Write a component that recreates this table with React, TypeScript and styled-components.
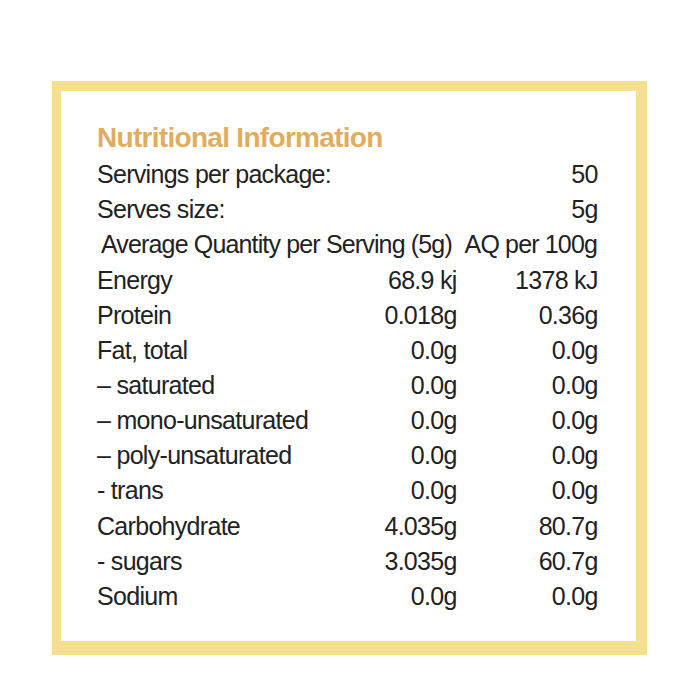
import React from "react";
import styled, { createGlobalStyle } from "styled-components";

const Global = createGlobalStyle`
  html, body { margin: 0; padding: 0; background: #ffffff; }
  body { font-family: "Liberation Sans", Arial, sans-serif; }
`;

const Page = styled.div`
  width: 700px;
  height: 700px;
  padding: 81px 0 0 52px;
  box-sizing: border-box;
`;

const Frame = styled.div`
  width: 595px;
  height: 574px;
  box-sizing: border-box;
  border-style: solid;
  border-color: #f4df91;
  border-width: 10px 11px 14px 9px;
  padding: 29px 39px 0 36px;
  background: #fff;
`;

const Title = styled.h2`
  margin: 0 0 1px;
  font-size: 28px;
  line-height: 36px;
  font-weight: 700;
  color: #dfae5c;
  letter-spacing: -0.7px;
`;

const Table = styled.div`
  display: grid;
  grid-template-columns: minmax(0, 1fr) 141px 141px;
  grid-auto-rows: 35.17px;
  align-items: center;
  color: #222;
  font-size: 25px;
  letter-spacing: -0.7px;
`;

const Cell = styled.div<{ $align?: "left" | "right" }>`
  text-align: ${(p) => p.$align ?? "left"};
  white-space: nowrap;
  margin-right: -0.7px;
`;

const Wide = styled.div<{ $span: string; $align?: "left" | "right" }>`
  grid-column: ${(p) => p.$span};
  text-align: ${(p) => p.$align ?? "left"};
  white-space: nowrap;
`;

const Header = styled.div`
  grid-column: 1 / -1;
  min-width: 0;
  display: flex;
  justify-content: space-between;
  padding-left: 4px;
  white-space: nowrap;
  letter-spacing: -0.85px;
`;

const rows: [string, string, string][] = [
  ["Energy", "68.9 kj", "1378 kJ"],
  ["Protein", "0.018g", "0.36g"],
  ["Fat, total", "0.0g", "0.0g"],
  ["– saturated", "0.0g", "0.0g"],
  ["– mono-unsaturated", "0.0g", "0.0g"],
  ["– poly-unsaturated", "0.0g", "0.0g"],
  ["- trans", "0.0g", "0.0g"],
  ["Carbohydrate", "4.035g", "80.7g"],
  ["- sugars", "3.035g", "60.7g"],
  ["Sodium", "0.0g", "0.0g"],
];

export default function App() {
  return (
    <Page>
      <Global />
      <Frame>
        <Title>Nutritional Information</Title>
        <Table>
          <Wide $span="1 / 3">Servings per package:</Wide>
          <Cell $align="right">50</Cell>
          <Wide $span="1 / 3">Serves size:</Wide>
          <Cell $align="right">5g</Cell>
          <Header>
            <span>Average Quantity per Serving (5g)</span>
            <span>AQ per 100g</span>
          </Header>
          {rows.map(([a, b, c]) => (
            <React.Fragment key={a}>
              <Cell>{a}</Cell>
              <Cell $align="right">{b}</Cell>
              <Cell $align="right">{c}</Cell>
            </React.Fragment>
          ))}
        </Table>
      </Frame>
    </Page>
  );
}
